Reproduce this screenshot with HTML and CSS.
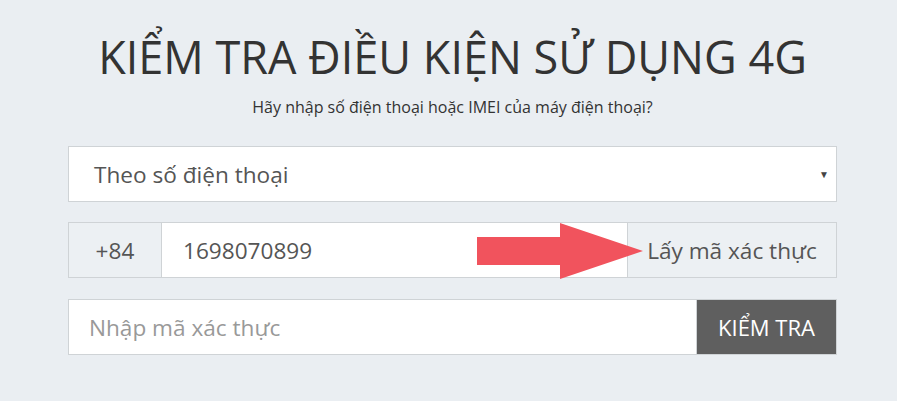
FILE: index.html
```html
<!DOCTYPE html>
<html lang="vi">
<head>
<meta charset="utf-8">
<link rel="stylesheet" href="styles.css">
</head>
<body>
<main class="wrap">
  <h1 class="title">KIỂM TRA ĐIỀU KIỆN SỬ DỤNG 4G</h1>
  <p class="sub">Hãy nhập số điện thoại hoặc IMEI của máy điện thoại?</p>
  <div class="select">
    <span class="select-text">Theo số điện thoại</span>
    <span class="caret">▼</span>
  </div>
  <div class="row phone">
    <div class="addon prefix">+84</div>
    <div class="field">1698070899</div>
    <div class="addon getcode">Lấy mã xác thực</div>
    <svg class="arrow" width="168" height="58" viewBox="0 0 168 58">
      <polygon points="0,14 83,14 83,0 166,28 83,56 83,42 0,42" fill="#f1535d"/>
    </svg>
  </div>
  <div class="row code">
    <div class="field placeholder">Nhập mã xác thực</div>
    <div class="btn">KIỂM TRA</div>
  </div>
</main>
</body>
</html>
```
FILE: styles.css
```css
html, body {
  margin: 0;
  padding: 0;
  background: #eaeef2;
}
body {
  font-family: "Open Sans", "Noto Sans", sans-serif;
  color: #333;
}
.wrap {
  width: 769px;
  margin-left: 68px;
  padding-top: 26px;
}
.title {
  margin: 0;
  font-size: 45px;
  font-weight: 400;
  line-height: 62px;
  text-align: center;
  color: #333;
}
.sub {
  margin: 8px 0 0;
  font-size: 16px;
  line-height: 22px;
  text-align: center;
  color: #333;
}
.select {
  margin-top: 28px;
  box-sizing: border-box;
  height: 56px;
  background: #fff;
  border: 1px solid #cfd3d6;
  display: flex;
  align-items: center;
  justify-content: space-between;
  padding: 0 7px 0 25px;
  font-size: 22.6px;
  color: #555;
}
.caret {
  font-size: 10px;
  color: #444;
}
.row {
  display: flex;
  height: 56px;
  box-sizing: border-box;
  position: relative;
}
.phone {
  margin-top: 20px;
}
.code {
  margin-top: 21px;
}
.addon {
  background: #ecf0f3;
  border: 1px solid #cfd3d6;
  display: flex;
  align-items: center;
  justify-content: center;
  font-size: 22.6px;
  color: #555;
  box-sizing: border-box;
}
.prefix {
  width: 93px;
  border-right: none;
}
.getcode {
  width: 209px;
  border-left: none;
}
.field {
  flex: 1;
  background: #fff;
  border: 1px solid #cfd3d6;
  display: flex;
  align-items: center;
  padding-left: 21px;
  font-size: 22.6px;
  color: #555;
  box-sizing: border-box;
}
.code .field {
  padding-left: 20px;
}
.placeholder {
  color: #999;
}
.btn {
  width: 140px;
  background: #5f5f5f;
  color: #fff;
  font-size: 22px;
  display: flex;
  align-items: center;
  justify-content: center;
  border: 1px solid #cfd3d6;
  border-left: none;
  box-sizing: border-box;
}
.arrow {
  position: absolute;
  left: 409px;
  top: 1px;
}
```
